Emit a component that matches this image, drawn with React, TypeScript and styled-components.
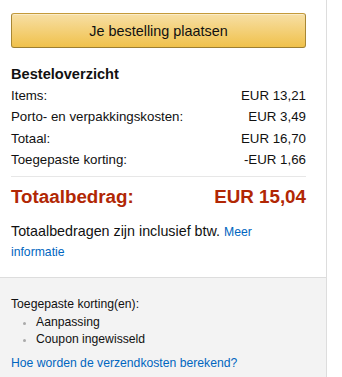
import React from "react";
import styled, { createGlobalStyle } from "styled-components";

const Global = createGlobalStyle`
  html, body { margin: 0; padding: 0; background: #fff; }
  body { font-family: "Liberation Sans", Arial, sans-serif; color: #111; }
`;

const Box = styled.div`
  width: 326px;
  border-right: 1px solid #ddd;
  background: #fff;
  min-height: 377px;
  display: flex;
  flex-direction: column;
`;

const Inner = styled.div`
  padding: 13px 20px 15px 11px;
`;

const PlaceButton = styled.button`
  display: block;
  width: 295px;
  height: 35px;
  border-radius: 3px;
  border: 1px solid;
  border-color: #c49a3a #a88734 #9c7e31;
  background: linear-gradient(to bottom, #f7dfa5, #f0c14b);
  box-shadow: inset 0 1px 0 rgba(255, 255, 255, 0.4);
  font-family: "Liberation Sans", Arial, sans-serif;
  font-size: 14.4px;
  color: #111;
  padding: 0;
  cursor: pointer;
`;

const Heading = styled.h3`
  margin: 16px 0 1px;
  font-size: 14.6px;
  font-weight: 700;
  line-height: 20px;
`;

const Row = styled.div`
  display: flex;
  justify-content: space-between;
  font-size: 13.3px;
  line-height: 21.3px;
`;

const Divider = styled.hr`
  border: 0;
  border-top: 1px solid #e7e7e7;
  margin: 6px 0 0;
`;

const TotalRow = styled.div`
  display: flex;
  justify-content: space-between;
  font-size: 18.8px;
  font-weight: 700;
  color: #b12704;
  line-height: 24px;
  margin-top: 8px;
`;

const Note = styled.p`
  margin: 13px 0 0;
  font-size: 14.3px;
  line-height: 19px;
`;

const Link = styled.a`
  font-size: 12.2px;
  color: #0066c0;
  text-decoration: none;
`;

const Footer = styled.div`
  flex: 1;
  background: #f3f3f3;
  border-top: 1px solid #ddd;
  padding: 18px 11px 10px;
  font-size: 12.2px;
  line-height: 17.5px;
`;

const List = styled.ul`
  margin: 0 0 6px;
  padding: 0 0 0 25px;
  list-style: none;
`;

const Item = styled.li`
  position: relative;
  &::before {
    content: "";
    position: absolute;
    left: -13px;
    top: 8px;
    width: 3px;
    height: 3px;
    border-radius: 50%;
    background: #aaa;
  }
`;

const rows: [string, string][] = [
  ["Items:", "EUR 13,21"],
  ["Porto- en verpakkingskosten:", "EUR 3,49"],
  ["Totaal:", "EUR 16,70"],
  ["Toegepaste korting:", "-EUR 1,66"],
];

export default function App() {
  return (
    <>
      <Global />
      <Box>
        <Inner>
          <PlaceButton>Je bestelling plaatsen</PlaceButton>
          <Heading>Besteloverzicht</Heading>
          {rows.map(([l, v]) => (
            <Row key={l}>
              <span>{l}</span>
              <span>{v}</span>
            </Row>
          ))}
          <Divider />
          <TotalRow>
            <span>Totaalbedrag:</span>
            <span>EUR 15,04</span>
          </TotalRow>
          <Note>
            Totaalbedragen zijn inclusief btw. <Link href="#">Meer informatie</Link>
          </Note>
        </Inner>
        <Footer>
          <div>Toegepaste korting(en):</div>
          <List>
            <Item>Aanpassing</Item>
            <Item>Coupon ingewisseld</Item>
          </List>
          <Link href="#">Hoe worden de verzendkosten berekend?</Link>
        </Footer>
      </Box>
    </>
  );
}
